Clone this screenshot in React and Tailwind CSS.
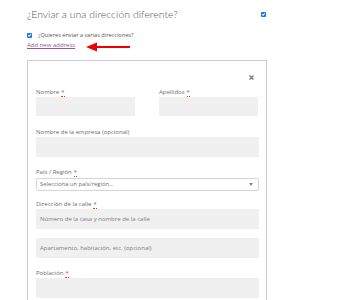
export default function App() {
    const Req = () => (
        <abbr className="ml-[2px] text-[#e2401c] no-underline border-b border-dotted border-[#e2401c]">*</abbr>
    );

    const labelCls = "block text-[6px] font-normal leading-[8px] text-[#6d6d6d] font-['Open_Sans',sans-serif]";

    return (
        <div className="w-[354px] h-[300px] overflow-hidden bg-white font-['Lato',sans-serif] text-[#43454b]">
            <div className="pl-[27px] pr-[88px] pt-[6px]">
                <div className="flex items-center justify-between h-[16px]">
                    <h3 className="text-[10.5px] font-light leading-[16px] text-[#555]">
                        ¿Enviar a una dirección diferente?
                    </h3>
                    <span className="w-[5px] h-[5px] rounded-[1px] bg-[#1a73e8] mt-[1px] flex items-center justify-center">
                        <span className="block w-[3px] h-[2px] border-l border-b border-white -rotate-45 -mt-px" />
                    </span>
                </div>

                <div className="flex items-center gap-[6px] mt-[9px] h-[8px]">
                    <span className="w-[5px] h-[5px] rounded-[1px] bg-[#1a73e8] flex items-center justify-center">
                        <span className="block w-[3px] h-[2px] border-l border-b border-white -rotate-45 -mt-px" />
                    </span>
                    <span className="text-[5.6px] font-normal leading-[8px] text-[#555] font-['Open_Sans',sans-serif]">¿Quieres enviar a varias direcciones?</span>
                </div>

                <div className="flex items-start h-[10px] mt-[1px]">
                    <a href="#" className="font-['Open_Sans',sans-serif] text-[6px] leading-[10px] text-[#96588a] underline">
                        Add new address
                    </a>
                    <svg width="46" height="12" viewBox="0 0 46 12" className="ml-[11px] mt-[1px] shrink-0">
                        <path d="M8 6 L44 6" stroke="#e00" strokeWidth="2" />
                        <path d="M0 6 L11 1.5 L11 10.5 Z" fill="#e00" />
                    </svg>
                </div>

                <div className="mt-[10px] w-[240px] border border-[#ccc] pl-[8px] pr-[7px] pt-[14px] pb-4">
                    <div className="flex justify-end pr-[5px] h-[5px]">
                        <svg width="5" height="5" viewBox="0 0 5 5">
                            <path d="M0.5 0.5 L4.5 4.5 M4.5 0.5 L0.5 4.5" stroke="#777" strokeWidth="1.3" />
                        </svg>
                    </div>

                    <div className="flex gap-[24px] mt-[8px]">
                        <div className="w-[99px]">
                            <label className={labelCls}>
                                Nombre<Req />
                            </label>
                            <div className="mt-px h-[19px] bg-[#f0f0f0]" />
                        </div>
                        <div className="w-[99px]">
                            <label className={labelCls}>
                                Apellidos<Req />
                            </label>
                            <div className="mt-px h-[19px] bg-[#f0f0f0]" />
                        </div>
                    </div>

                    <label className={`${labelCls} mt-[12px]`}>
                        Nombre de la empresa (opcional)
                    </label>
                    <div className="mt-px h-[20px] bg-[#f0f0f0]" />

                    <label className={`${labelCls} mt-[11px]`}>
                        País / Región<Req />
                    </label>
                    <div className="mt-[2px] h-[13px] border border-[#d6d6d6] rounded-[2px] bg-white flex items-center justify-between px-[3px]">
                        <span className="text-[5.8px] font-normal text-[#6d6d6d] font-['Open_Sans',sans-serif]">Selecciona un país/región…</span>
                        <span className="w-0 h-0 border-l-[2px] border-r-[2px] border-t-[3px] border-l-transparent border-r-transparent border-t-[#888] mr-[2px]" />
                    </div>

                    <label className={`${labelCls} mt-[9px]`}>
                        Dirección de la calle<Req />
                    </label>
                    <div className="mt-px h-[20px] bg-[#f0f0f0] flex items-center px-[4px]">
                        <span className="text-[6px] text-[#808080] font-['Open_Sans',sans-serif]">Número de la casa y nombre de la calle</span>
                    </div>
                    <div className="mt-[9px] h-[20px] bg-[#f0f0f0] flex items-center px-[4px]">
                        <span className="text-[6px] text-[#808080] font-['Open_Sans',sans-serif]">Apartamento, habitación, etc. (opcional)</span>
                    </div>

                    <label className={`${labelCls} mt-[11px]`}>
                        Población<Req />
                    </label>
                    <div className="mt-px h-[20px] bg-[#f0f0f0]" />
                </div>
            </div>
        </div>
    );
}
